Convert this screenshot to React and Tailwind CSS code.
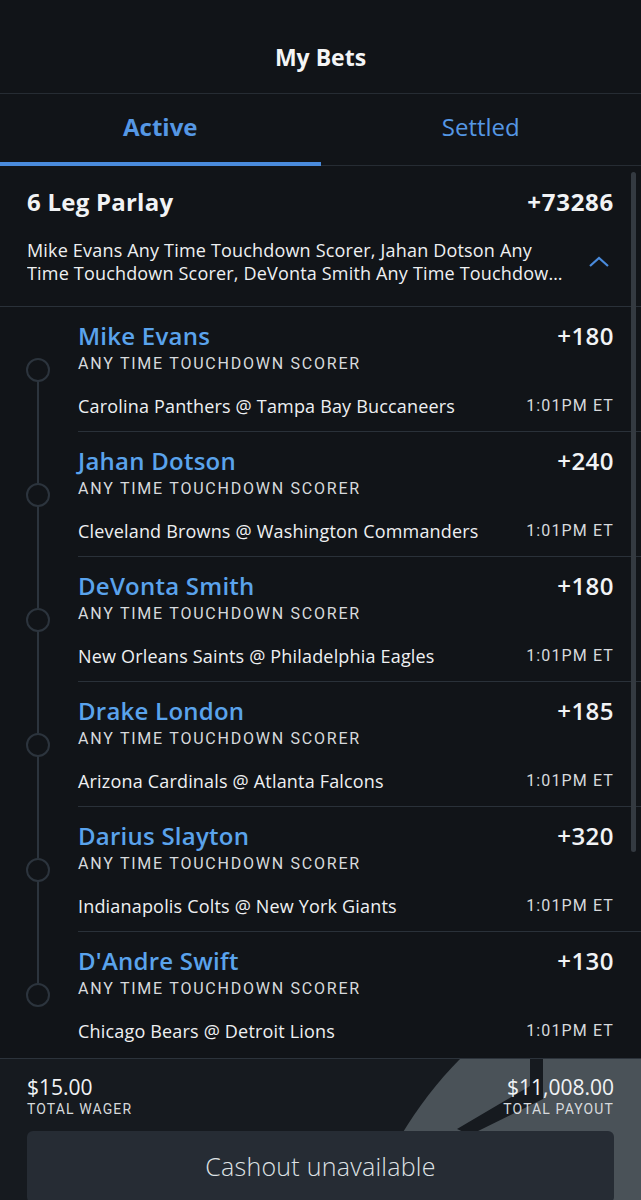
import React from 'react';

const legs = [
  { name: 'Mike Evans', odds: '+180', game: 'Carolina Panthers @ Tampa Bay Buccaneers' },
  { name: 'Jahan Dotson', odds: '+240', game: 'Cleveland Browns @ Washington Commanders' },
  { name: 'DeVonta Smith', odds: '+180', game: 'New Orleans Saints @ Philadelphia Eagles' },
  { name: 'Drake London', odds: '+185', game: 'Arizona Cardinals @ Atlanta Falcons' },
  { name: 'Darius Slayton', odds: '+320', game: 'Indianapolis Colts @ New York Giants' },
  { name: "D'Andre Swift", odds: '+130', game: 'Chicago Bears @ Detroit Lions' },
];

function Leg({ leg, first, last }) {
  return (
    <div className="flex h-[125px]">
      {/* timeline */}
      <div className="relative w-[78px] shrink-0">
        {!first && <div className="absolute left-[37px] top-0 h-[51px] w-[2px] bg-[#2c343d]" />}
        {!last && <div className="absolute left-[37px] top-[74px] bottom-0 w-[2px] bg-[#2c343d]" />}
        <div className="absolute left-[26px] top-[51px] h-[24px] w-[24px] rounded-full border-2 border-[#2c343d]" />
      </div>
      <div className={`flex-1 pr-[27px] pt-[15px] ${last ? '' : 'border-b border-[#2a3139]'}`}>
        <div className="flex items-start justify-between">
          <div className="text-[24px] font-semibold leading-[28px] tracking-[0.01em] text-[#5aa3ec]">{leg.name}</div>
          <div className="text-[24px] font-semibold leading-[28px] tracking-[0.02em] text-[#f1f3f5]">{leg.odds}</div>
        </div>
        <div className="mt-[3px] font-['Roboto'] text-[16px] leading-[22px] tracking-[0.11em] text-[#d7dadd]">
          ANY TIME TOUCHDOWN SCORER
        </div>
        <div className="mt-[19px] flex items-center justify-between">
          <div className="text-[18px] leading-[24px] tracking-[0.01em] text-[#eef0f2]">{leg.game}</div>
          <div className="font-['Roboto'] text-[16px] leading-[22px] tracking-[0.07em] text-[#d7dadd]">1:01PM ET</div>
        </div>
      </div>
    </div>
  );
}

export default function App() {
  return (
    <div className="relative h-[1200px] w-[641px] overflow-hidden bg-[#111418] font-['Open_Sans',sans-serif] text-white">
      {/* title */}
      <header className="flex h-[94px] items-center justify-center border-b border-[#262c33] pt-[22px]">
        <h1 className="text-[23px] font-bold text-[#f4f5f6]">My Bets</h1>
      </header>

      {/* tabs */}
      <div className="flex h-[72px] border-b border-[#262c33] pb-[6px]">
        <button className="relative flex-1 text-[24px] font-bold text-[#5597e4]">
          Active
          <span className="absolute bottom-[-7px] left-0 h-[4px] w-full bg-[#4a8bdc]" />
        </button>
        <button className="flex-1 text-[24px] text-[#5597e4]">Settled</button>
      </div>

      <div className="relative">
        {/* scrollbar */}
        <div className="absolute right-[5px] top-[6px] h-[680px] w-[5px] rounded-full bg-[#343a41]" />

        {/* parlay summary */}
        <div className="border-b border-[#2a3139] px-[27px] pb-[21px] pt-[18px]">
          <div className="flex items-center justify-between">
            <div className="text-[24px] font-bold tracking-[0.01em] text-[#f1f3f5]">6 Leg Parlay</div>
            <div className="text-[24px] font-bold tracking-[0.03em] text-[#f1f3f5]">+73286</div>
          </div>
          <div className="mt-[19px] flex items-center justify-between">
            <p className="line-clamp-2 w-[540px] text-[18px] leading-[23px] tracking-[0.01em] text-[#eef0f2]">
              Mike Evans Any Time Touchdown Scorer, Jahan Dotson Any Time Touchdown Scorer, DeVonta Smith Any Time Touchdown Scorer
            </p>
            <svg width="22" height="14" viewBox="0 0 22 14" className="mr-[4px]">
              <path d="M2 11 L11 3 L20 11" fill="none" stroke="#4a8bdc" strokeWidth="2.2" />
            </svg>
          </div>
        </div>

        {/* legs */}
        <div>
          {legs.map((leg, i) => (
            <Leg key={leg.name} leg={leg} first={i === 0} last={i === legs.length - 1} />
          ))}
        </div>
      </div>

      {/* footer */}
      <footer className="absolute bottom-0 left-0 right-0 h-[142px] overflow-hidden border-t border-[#2c333b] bg-[#161a1f]">
        <svg className="absolute left-0 top-0" width="641" height="142" viewBox="0 0 641 142">
          <path d="M460 0 L641 0 L641 142 L404 142 L400 78 C418 48 438 22 460 0 Z" fill="#4a5258" />
          <path d="M530 0 L543 0 L543 40 L470 76 L457 70 L530 27 Z" fill="#161a1f" />
        </svg>
        <div className="relative flex justify-between px-[27px] pt-[15px]">
          <div>
            <div className="text-[21px] leading-[26px] text-[#f1f3f5]">$15.00</div>
            <div className="font-['Roboto'] text-[14px] leading-[18px] tracking-[0.08em] text-[#d7dadd]">TOTAL WAGER</div>
          </div>
          <div className="text-right">
            <div className="text-[21px] leading-[26px] text-[#f1f3f5]">$11,008.00</div>
            <div className="font-['Roboto'] text-[14px] leading-[18px] tracking-[0.08em] text-[#d7dadd]">TOTAL PAYOUT</div>
          </div>
        </div>
        <div className="relative mx-[27px] mt-[13px] flex h-[72px] items-center justify-center rounded-[6px] bg-[#262c34]">
          <span className="text-[25px] font-light tracking-[0.01em] text-[#dfe2e5]">Cashout unavailable</span>
        </div>
      </footer>
    </div>
  );
}
